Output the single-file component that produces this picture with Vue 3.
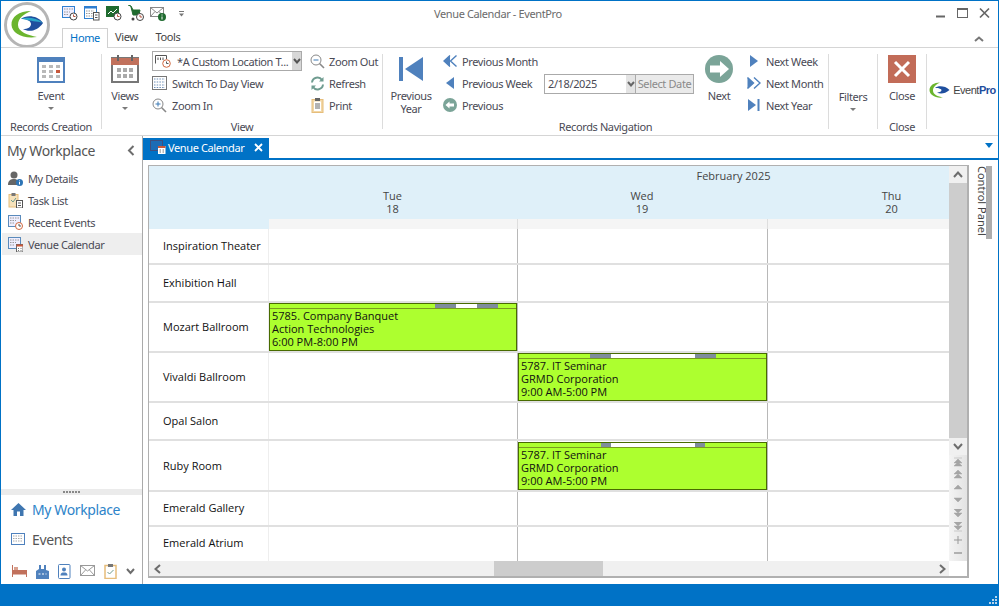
<script setup>
const days = [
  { name: 'Tue', num: 18 },
  { name: 'Wed', num: 19 },
  { name: 'Thu', num: 20 }
]
const banquet = { lines: ['5785. Company Banquet', 'Action Technologies', '6:00 PM-8:00 PM'], seg: [165, 21, 21, 21] }
const seminarA = { lines: ['5787. IT Seminar', 'GRMD Corporation', '9:00 AM-5:00 PM'], seg: [71, 21, 84, 21] }
const seminarB = { lines: ['5787. IT Seminar', 'GRMD Corporation', '9:00 AM-5:00 PM'], seg: [82, 10, 84, 10] }
const rows = [
  { name: 'Inspiration Theater', h: 36, cells: [null, null, null] },
  { name: 'Exhibition Hall', h: 38, cells: [null, null, null] },
  { name: 'Mozart Ballroom', h: 50, cells: [banquet, null, null] },
  { name: 'Vivaldi Ballroom', h: 50, cells: [null, seminarA, null] },
  { name: 'Opal Salon', h: 38, cells: [null, null, null] },
  { name: 'Ruby Room', h: 51, cells: [null, seminarB, null], top: 1 },
  { name: 'Emerald Gallery', h: 35, cells: [null, null, null] },
  { name: 'Emerald Atrium', h: 34, cells: [null, null, null] }
]
const scrollGlyphs = [
  'M1 1H9M5 2L1 6H9ZM5 5L1 9H9Z',
  'M5 0L1 4H9ZM5 4L1 8H9Z',
  'M5 2L1 6H9Z',
  'M1 2H9L5 6Z',
  'M1 0H9L5 4ZM1 4H9L5 8Z',
  'M1 0H9L5 4ZM1 4H9L5 8ZM1 9H9'
]
</script>

<template>
  <div class="win">
    <header class="head">
      <div class="logo-wrap">
        <svg class="ic" width="46" height="46" viewBox="0 0 46 46">
          <circle cx="23" cy="23" r="21.5" fill="#fff" stroke="#b5b5b5" stroke-width="3" />
          <path d="M27 9C15 9 7 15 7.500 23C8 31 18 37 33 35C24 33 14 30 14 23C14 16 20 12 27 9Z" fill="#6bb52e" />
          <path d="M17 17C22 13 33 13 39 21C33 30 24 30 19 27C24 27 27 25 27 22C27 19 23 17 17 17Z" fill="#1f4f9e" />
          <path d="M17 17C22 15 32 15 39 21C33 19 25 19 23 18C21 17 19 17 17 17Z" fill="#2aa7c9" />
        </svg>
      </div>
      <div class="head-main">
        <div class="title-row">
          <div class="qat">
            <svg class="ic" width="16" height="16" viewBox="0 0 16 16"><rect x=".5" y="1.500" width="12" height="11" fill="#eef" stroke="#2f7fd0"/><path d="M2 4h9M2 7h6M2 9.500h5" stroke="#999" stroke-dasharray="1.500 1"/><circle cx="11.500" cy="11.500" r="3.500" fill="#fff" stroke="#444"/><path d="M11.500 9.500v2h2" stroke="#b5533c" fill="none"/></svg>
            <svg class="ic" width="16" height="16" viewBox="0 0 16 16"><rect x=".5" y="1.500" width="12" height="12" fill="#fff" stroke="#2f7fd0"/><rect x=".5" y="1.500" width="12" height="2" fill="#2f7fd0"/><path d="M2 6h8M2 8.500h8M2 11h8" stroke="#999" stroke-dasharray="1.500 1"/><rect x="9.500" y="7.500" width="5.500" height="7.500" fill="#fff" stroke="#555"/><path d="M11 10h2.500M11 12.500h2.500" stroke="#555"/></svg>
            <svg class="ic" width="16" height="16" viewBox="0 0 16 16"><rect x="0" y="1" width="13" height="11" fill="#1f6b2f"/><path d="M2 9l3-3 2 2 4-4" stroke="#fff" fill="none"/><circle cx="11.500" cy="11.500" r="3.500" fill="#fff" stroke="#444"/><path d="M11.500 9.500v2h2" stroke="#b5533c" fill="none"/></svg>
            <svg class="ic" width="16" height="16" viewBox="0 0 16 16"><path d="M0 0l3 1 2 4h7l-1 5H5L3 2" fill="#1f6b2f" stroke="#1f6b2f"/><circle cx="5" cy="14" r="1.500" fill="#444"/><circle cx="12" cy="12" r="3.500" fill="#fff" stroke="#444"/><path d="M12 10v2h2" stroke="#b5533c" fill="none"/></svg>
            <svg class="ic" width="17" height="16" viewBox="0 0 17 16"><rect x=".5" y="2.500" width="13" height="9" fill="#fff" stroke="#888"/><path d="M.5 2.500L7 8l6.500-5.500M.5 11.500L5 6.500M13.500 11.500L9 6.500" stroke="#888" fill="none"/><circle cx="12" cy="12" r="4" fill="#1f6b2f"/><path d="M12 9.500v1M12 11.500v3" stroke="#fff"/></svg>
            <svg class="ic qat-caret" width="7" height="6" viewBox="0 0 7 6"><path d="M1 .5H6" stroke="#777"/><path d="M1 2.500H6L3.500 5.500Z" fill="#777"/></svg>
          </div>
          <div class="title">Venue Calendar - EventPro</div>
          <div class="winbtns">
            <svg class="ic win-min" width="9" height="12" viewBox="0 0 9 12"><path d="M0 9.500H9" stroke="#666" stroke-width="2"/></svg>
            <svg class="ic" width="11" height="12" viewBox="0 0 11 12"><rect x=".5" y="1.500" width="10" height="9" fill="none" stroke="#666"/><path d="M0 2H11" stroke="#666" stroke-width="2"/></svg>
            <svg class="ic" width="11" height="12" viewBox="0 0 11 12"><path d="M1 1.500L10 10.500M10 1.500L1 10.500" stroke="#666" stroke-width="1.700"/></svg>
          </div>
        </div>
        <div class="tabs-row">
          <div class="rtab active">Home</div>
          <div class="rtab">View</div>
          <div class="rtab">Tools</div>
          <svg class="ic collapse" width="10" height="6" viewBox="0 0 10 6"><path d="M1 5L5 1.500L9 5" stroke="#777" stroke-width="2" fill="none"/></svg>
        </div>
      </div>
    </header>

    <section class="ribbon">
      <div class="group g-create">
        <div class="g-body">
          <div class="big">
            <svg class="ic" width="28" height="26" viewBox="0 0 28 26"><rect x="1" y="1" width="26" height="24" fill="#fff" stroke="#4f81bd" stroke-width="2"/><rect x="1" y="1" width="26" height="4" fill="#4f81bd"/><g fill="#b9b9b9"><rect x="5" y="8" width="4" height="3"/><rect x="12" y="8" width="4" height="3"/><rect x="19" y="8" width="4" height="3"/><rect x="5" y="13" width="4" height="3"/><rect x="12" y="13" width="4" height="3"/><rect x="5" y="18" width="4" height="3"/><rect x="12" y="18" width="4" height="3"/><rect x="19" y="18" width="4" height="3"/></g><rect x="19" y="13" width="4" height="3" fill="#c8593c"/></svg>
            <span class="big-l">Event</span>
            <span class="caret"></span>
          </div>
        </div>
        <div class="g-label">Records Creation</div>
      </div>
      <div class="sep"></div>

      <div class="group g-view">
        <div class="g-body">
          <div class="big big-views">
            <svg class="ic" width="28" height="28" viewBox="0 0 28 28"><rect x="1" y="3" width="26" height="24" fill="#fff" stroke="#777" stroke-width="2"/><rect x="0" y="3" width="28" height="7" fill="#c1715c"/><rect x="6" y="0" width="2" height="6" fill="#666"/><rect x="20" y="0" width="2" height="6" fill="#666"/><g fill="#aaa"><rect x="6" y="13" width="4" height="4"/><rect x="12" y="13" width="4" height="4"/><rect x="18" y="13" width="4" height="4"/><rect x="6" y="19" width="4" height="4"/><rect x="12" y="19" width="4" height="4"/><rect x="18" y="19" width="4" height="4"/></g></svg>
            <span class="big-l">Views</span>
            <span class="caret"></span>
          </div>
          <div class="col col-view">
            <div class="combo">
              <svg class="ic" width="16" height="14" viewBox="0 0 16 14"><path d="M.5 9.500V1.500H11.500V5" fill="none" stroke="#555"/><path d="M3 3.500V6M5.500 3.500V6M8 3.500V6" stroke="#555"/><circle cx="11.500" cy="9.500" r="3.800" fill="#fff" stroke="#d0663e"/><path d="M11.500 7.500v2h2" stroke="#555" fill="none"/></svg>
              <span class="combo-t">*A Custom Location T...</span>
              <span class="combo-arrow"><svg class="ic" width="8" height="6" viewBox="0 0 8 6"><path d="M1 1L4 4.500L7 1" stroke="#555" stroke-width="2" fill="none"/></svg></span>
            </div>
            <div class="cmd">
              <svg class="ic" width="15" height="14" viewBox="0 0 15 14"><rect x=".5" y=".5" width="14" height="13" fill="#fff" stroke="#777"/><path d="M2 3H13M2 6H13M2 9H13M2 11.500H13" stroke="#6d8fb8" stroke-dasharray="1.500 1.200"/></svg>
              <span>Switch To Day View</span>
            </div>
            <div class="cmd">
              <svg class="ic" width="15" height="15" viewBox="0 0 15 15"><circle cx="6" cy="6" r="5" fill="#fff" stroke="#888"/><path d="M3.500 6H8.500M6 3.500V8.500" stroke="#3d7bb5"/><path d="M9.500 9.500L14 14" stroke="#888" stroke-width="1.600"/></svg>
              <span>Zoom In</span>
            </div>
          </div>
          <div class="col col-zoom">
            <div class="cmd">
              <svg class="ic" width="15" height="15" viewBox="0 0 15 15"><circle cx="6" cy="6" r="5" fill="#fff" stroke="#888"/><path d="M3.500 6H8.500" stroke="#3d7bb5"/><path d="M9.500 9.500L14 14" stroke="#888" stroke-width="1.600"/></svg>
              <span>Zoom Out</span>
            </div>
            <div class="cmd">
              <svg class="ic" width="15" height="15" viewBox="0 0 15 15"><path d="M2 6.500A5.500 5.500 0 0 1 12 4" fill="none" stroke="#6f9c90" stroke-width="2"/><path d="M13.500 1V5.500H9Z" fill="#6f9c90"/><path d="M13 8.500A5.500 5.500 0 0 1 3 11" fill="none" stroke="#6f9c90" stroke-width="2"/><path d="M1.500 14V9.500H6Z" fill="#6f9c90"/></svg>
              <span>Refresh</span>
            </div>
            <div class="cmd">
              <svg class="ic" width="15" height="15" viewBox="0 0 15 15"><rect x="2" y="1.500" width="11" height="13" fill="#f2d7a6" stroke="#e6bd7b"/><rect x="4" y="3.500" width="7" height="9.500" fill="#fff"/><rect x="5" y="0" width="5" height="3" fill="#666"/><path d="M5 6H10M5 8H10M5 10H10" stroke="#666"/></svg>
              <span>Print</span>
            </div>
          </div>
        </div>
        <div class="g-label">View</div>
      </div>
      <div class="sep"></div>

      <div class="group g-nav">
        <div class="g-body">
          <div class="big big-prev">
            <svg class="ic" width="24" height="24" viewBox="0 0 24 24"><rect x="0" y="0" width="4" height="24" fill="#4f81bd"/><path d="M24 0V24L6 12Z" fill="#4f81bd"/></svg>
            <span class="big-l two">Previous<br />Year</span>
          </div>
          <div class="col col-prev">
            <div class="cmd">
              <svg class="ic" width="14" height="12" viewBox="0 0 14 12"><path d="M7 .5L1 6L7 11.500M13.500 .5L7.500 6L13.500 11.500" fill="none" stroke="#4f81bd" stroke-width="1.400"/><path d="M7 .5L1 6L7 11.500Z" fill="#4f81bd"/></svg>
              <span>Previous Month</span>
            </div>
            <div class="cmd">
              <svg class="ic" width="14" height="12" viewBox="0 0 14 12"><path d="M11 0V12L3 6Z" fill="#4f81bd"/></svg>
              <span>Previous Week</span>
            </div>
            <div class="cmd">
              <svg class="ic" width="14" height="14" viewBox="0 0 14 14"><circle cx="7" cy="7" r="7" fill="#7ba498"/><path d="M2.500 7L6.500 3.500V5.500H11V8.500H6.500V10.500Z" fill="#fff"/></svg>
              <span>Previous</span>
            </div>
          </div>
          <div class="date-wrap">
            <div class="date">
              <span class="date-v">2/18/2025</span>
              <span class="date-arrow"><svg class="ic" width="8" height="6" viewBox="0 0 8 6"><path d="M1 1L4 4.500L7 1" stroke="#666" stroke-width="2" fill="none"/></svg></span>
              <span class="date-btn">Select Date</span>
            </div>
          </div>
          <div class="big big-next">
            <svg class="ic" width="28" height="28" viewBox="0 0 28 28"><circle cx="14" cy="14" r="14" fill="#7ba498"/><path d="M24 14L15 6V10.500H5V17.500H15V22Z" fill="#fff"/></svg>
            <span class="big-l">Next</span>
          </div>
          <div class="col col-next">
            <div class="cmd">
              <svg class="ic" width="14" height="12" viewBox="0 0 14 12"><path d="M3 0V12L11 6Z" fill="#4f81bd"/></svg>
              <span>Next Week</span>
            </div>
            <div class="cmd">
              <svg class="ic" width="14" height="12" viewBox="0 0 14 12"><path d="M7 .5L13 6L7 11.500M.5 .5L6.500 6L.5 11.500" fill="none" stroke="#4f81bd" stroke-width="1.400"/><path d="M.5 .5L6.500 6L.5 11.500Z" fill="#4f81bd"/></svg>
              <span>Next Month</span>
            </div>
            <div class="cmd">
              <svg class="ic" width="14" height="12" viewBox="0 0 14 12"><path d="M1 0V12L9 6Z" fill="#4f81bd"/><rect x="10.500" y="0" width="2" height="12" fill="#4f81bd"/></svg>
              <span>Next Year</span>
            </div>
          </div>
        </div>
        <div class="g-label">Records Navigation</div>
      </div>
      <div class="sep"></div>

      <div class="group g-filter">
        <div class="filter-btn">
          <span class="big-l">Filters</span>
          <span class="caret"></span>
        </div>
      </div>
      <div class="sep"></div>

      <div class="group g-close">
        <div class="g-body">
          <div class="big">
            <svg class="ic" width="28" height="28" viewBox="0 0 28 28"><rect width="28" height="28" fill="#c26c58"/><path d="M7 7L21 21M21 7L7 21" stroke="#fff" stroke-width="3"/></svg>
            <span class="big-l">Close</span>
          </div>
        </div>
        <div class="g-label">Close</div>
      </div>
      <div class="sep"></div>

      <div class="brand">
        <svg class="ic" width="21" height="17" viewBox="0 0 21 17"><path d="M11 .5C5 .5 .5 3.500 .5 8C.5 12.500 6 16.500 14 15.500C9 14.500 4 12.500 4 8.500C4 5 7 2.500 11 .5Z" fill="#6bb52e"/><path d="M6 6C9 3.500 16 3.500 20.500 8C16 12 11 12 8 10.500C11 10.500 12.500 9.500 12.500 8C12.500 7 10 6 6 6Z" fill="#1f4f9e"/></svg>
        <span class="brand-t">Event<b>Pro</b></span>
      </div>
    </section>

    <main class="main">
      <aside class="side">
        <div class="side-top">
          <span>My Workplace</span>
          <svg class="ic" width="8" height="11" viewBox="0 0 8 11"><path d="M6.500 1L2 5.500L6.500 10" fill="none" stroke="#6d6d6d" stroke-width="2"/></svg>
        </div>
        <div class="side-item">
          <svg class="ic" width="15" height="15" viewBox="0 0 15 15"><circle cx="6" cy="4" r="3.500" fill="#666"/><path d="M0 14C0 9 3 8 6 8C9 8 10 9 10 14Z" fill="#666"/><circle cx="11.500" cy="11.500" r="3.500" fill="#2e75b6"/><path d="M11.500 9.500v.8M11.500 11v2.500" stroke="#fff"/></svg>
          <span>My Details</span>
        </div>
        <div class="side-item">
          <svg class="ic" width="15" height="15" viewBox="0 0 15 15"><rect x="1" y="1.500" width="9" height="12.500" fill="#f6e2bb" stroke="#e6bd7b"/><rect x="3.500" y="0" width="4" height="3" fill="#777"/><path d="M3 7L5 9L8 5" fill="none" stroke="#6f9c90"/><rect x="8.500" y="7.500" width="6" height="7.500" fill="#fff" stroke="#555"/><path d="M10 10H13M10 12.500H13" stroke="#555"/></svg>
          <span>Task List</span>
        </div>
        <div class="side-item">
          <svg class="ic" width="15" height="15" viewBox="0 0 15 15"><rect x=".5" y=".5" width="12" height="11" fill="#eef" stroke="#5a8abb"/><path d="M2 3H11M2 5.500H8M2 8H6" stroke="#999" stroke-dasharray="1.500 1"/><circle cx="11" cy="11" r="3.500" fill="#fff" stroke="#d0663e"/><path d="M11 9v2h2" stroke="#555" fill="none"/></svg>
          <span>Recent Events</span>
        </div>
        <div class="side-item current">
          <svg class="ic" width="15" height="15" viewBox="0 0 15 15"><rect x=".5" y=".5" width="12" height="11" fill="#eef" stroke="#5a8abb"/><path d="M2 3H11M2 5.500H8M2 8H6" stroke="#999" stroke-dasharray="1.500 1"/><rect x="8.500" y="7.500" width="6.500" height="7.500" fill="#fff" stroke="#666"/><rect x="8.500" y="7.500" width="6.500" height="2" fill="#c8593c"/><path d="M10 11.500H11M12.500 11.500H13.500M10 13.500H11M12.500 13.500H13.500" stroke="#777"/></svg>
          <span>Venue Calendar</span>
        </div>
        <div class="splitter"><span></span><span></span><span></span><span></span><span></span><span></span></div>
        <div class="nav-big sel">
          <svg class="ic" width="15" height="13" viewBox="0 0 15 13"><path d="M7.500 0L15 7H12.500V13H9V8.500H6V13H2.500V7H0Z" fill="#3f76b0"/></svg>
          <span>My Workplace</span>
        </div>
        <div class="nav-big">
          <svg class="ic" width="15" height="13" viewBox="0 0 15 13"><rect x=".5" y=".5" width="13" height="11" fill="#fff" stroke="#4f81bd"/><path d="M2 3H12M2 5.500H12M2 8H12" stroke="#aaa" stroke-dasharray="1.500 1"/></svg>
          <span>Events</span>
        </div>
        <div class="nav-icons">
          <svg class="ic" width="15" height="12" viewBox="0 0 15 12"><path d="M.5 0V12M14.500 5V12M.5 9H14.500" stroke="#c1715c" fill="none"/><rect x="1" y="5" width="13.500" height="4" fill="#c1715c"/><rect x="2" y="2" width="4" height="3" fill="#d9a18f"/></svg>
          <svg class="ic" width="13" height="15" viewBox="0 0 13 15"><path d="M0 15V7L3 5V1H5V5H8V1H10V6L13 7V15Z" fill="#4f81bd"/><path d="M2.500 10H10.500" stroke="#fff" stroke-dasharray="2 1.500"/></svg>
          <svg class="ic" width="13" height="15" viewBox="0 0 13 15"><rect x=".5" y=".5" width="11.500" height="14" rx="1" fill="#fff" stroke="#4f81bd"/><circle cx="6" cy="5.500" r="2" fill="#4f81bd"/><path d="M2.500 11.500C2.500 9 4 8.500 6 8.500C8 8.500 9.500 9 9.500 11.500Z" fill="#4f81bd"/></svg>
          <svg class="ic" width="15" height="12" viewBox="0 0 15 12"><rect x=".5" y=".5" width="14" height="10" fill="#fff" stroke="#999"/><path d="M.5 .5L7.500 6L14.500 .5M.5 10.500L5.500 5M14.500 10.500L9.500 5" fill="none" stroke="#999"/></svg>
          <svg class="ic" width="13" height="15" viewBox="0 0 13 15"><rect x="1" y="1.500" width="11" height="13" fill="#fff" stroke="#e6bd7b" stroke-width="1.500"/><rect x="4" y="0" width="5" height="3" fill="#777"/><path d="M3.500 8L5.500 10L9.500 6" fill="none" stroke="#6f9c90"/></svg>
          <svg class="ic" width="9" height="7" viewBox="0 0 9 7"><path d="M1 1L4.500 5L8 1" fill="none" stroke="#6d6d6d" stroke-width="2"/></svg>
        </div>
      </aside>

      <div class="content">
        <div class="doc-strip">
          <div class="doc-tab">
            <svg class="ic" width="16" height="14" viewBox="0 0 16 14"><rect x=".5" y=".5" width="12" height="10" fill="#1d6cb5" stroke="#3d4f80"/><rect x="8" y="6" width="7.500" height="8" fill="#fff"/><rect x="8" y="6" width="7.500" height="2" fill="#c8593c"/><path d="M9.500 10H11M12.500 10H14M9.500 12H11M12.500 12H14" stroke="#777"/></svg>
            <span>Venue Calendar</span>
            <svg class="ic" width="9" height="9" viewBox="0 0 9 9"><path d="M1 1L8 8M8 1L1 8" stroke="#fff" stroke-width="1.800"/></svg>
          </div>
          <svg class="ic strip-caret" width="8" height="5" viewBox="0 0 8 5"><path d="M0 0H8L4 5Z" fill="#0072c6"/></svg>
        </div>
        <div class="doc-body">
          <div class="frame">
            <div class="frame-top">
              <div class="cal">
                <div class="cal-head">
                  <div class="month">February 2025</div>
                  <div class="day-row">
                    <div></div>
                    <div v-for="d in days" :key="d.name" class="day">
                      <div>{{ d.name }}</div>
                      <div>{{ d.num }}</div>
                    </div>
                  </div>
                </div>
                <div class="tick-row">
                  <div class="tick-corner"></div>
                  <div class="tick"></div>
                  <div class="tick"></div>
                  <div class="tick"></div>
                </div>
                <div v-for="r in rows" :key="r.name" class="row" :style="{ height: r.h + 'px' }">
                  <div class="res" :class="{ centred: r.top }">{{ r.name }}</div>
                  <div v-for="(c, i) in r.cells" :key="i" class="cell">
                    <div v-if="c" class="ev" :class="{ lowered: r.top }">
                      <div class="ev-strip">
                        <span v-for="(w, j) in c.seg" :key="j" class="seg" :style="{ width: w + 'px' }"></span>
                      </div>
                      <div v-for="l in c.lines" :key="l" class="ev-l">{{ l }}</div>
                    </div>
                  </div>
                </div>
              </div>
              <div class="vscroll">
                <div class="v-btn"><svg class="ic" width="10" height="7" viewBox="0 0 10 7"><path d="M1 6L5 1.500L9 6" stroke="#6d6d6d" stroke-width="2" fill="none"/></svg></div>
                <div class="v-thumb"></div>
                <div class="v-btn"><svg class="ic" width="10" height="7" viewBox="0 0 10 7"><path d="M1 1L5 5.500L9 1" stroke="#6d6d6d" stroke-width="2" fill="none"/></svg></div>
                <div class="v-nav">
                  <svg v-for="(g, i) in scrollGlyphs" :key="i" class="ic" width="10" height="10" viewBox="0 0 10 10"><path :d="g" fill="#a5a5a5" stroke="#a5a5a5" stroke-width=".5"/></svg>
                  <svg class="ic" width="10" height="10" viewBox="0 0 10 10"><path d="M5 1V9M1 5H9" stroke="#999"/></svg>
                  <svg class="ic" width="10" height="10" viewBox="0 0 10 10"><path d="M1 5H9" stroke="#888" stroke-width="1.200"/></svg>
                </div>
              </div>
            </div>
            <div class="hscroll">
              <svg class="ic" width="7" height="10" viewBox="0 0 7 10"><path d="M6 1L1.500 5L6 9" stroke="#6d6d6d" stroke-width="2" fill="none"/></svg>
              <div class="h-thumb"></div>
              <svg class="ic" width="7" height="10" viewBox="0 0 7 10"><path d="M1 1L5.500 5L1 9" stroke="#6d6d6d" stroke-width="2" fill="none"/></svg>
            </div>
          </div>
          <div class="panel">
            <span class="panel-t">Control Panel</span>
            <span class="panel-bar"></span>
          </div>
        </div>
      </div>
    </main>

    <footer class="status">
      <svg class="ic" width="9" height="9" viewBox="0 0 9 9"><g fill="#b8d4ea"><rect x="6" y="0" width="2" height="2"/><rect x="3" y="3" width="2" height="2"/><rect x="6" y="3" width="2" height="2"/><rect x="0" y="6" width="2" height="2"/><rect x="3" y="6" width="2" height="2"/><rect x="6" y="6" width="2" height="2"/></g></svg>
    </footer>
  </div>
</template>

<style>
html, body { margin: 0; padding: 0; background: #fff; }
</style>

<style scoped>
.win {
  width: 999px;
  height: 606px;
  box-sizing: border-box;
  border: 1px solid #0072c6;
  border-bottom: 0;
  display: flex;
  flex-direction: column;
  overflow: hidden;
  background: #fff;
  font-family: "Noto Sans", "Open Sans", sans-serif;
  font-size: 11px;
  letter-spacing: -.38px;
  color: #4a4a55;
}
.ic { display: block; flex: none; }

.head { display: flex; height: 46px; flex: none; }
.logo-wrap { width: 61px; flex: none; padding: 1px 0 0 3px; box-sizing: border-box; }
.head-main { flex: 1; display: flex; flex-direction: column; min-width: 0; }
.title-row { height: 23px; display: flex; align-items: center; padding-top: 1px; box-sizing: border-box; }
.qat { width: 372px; flex: none; display: flex; align-items: center; gap: 6px; }
.qat-caret { margin-left: 5px; margin-top: 2px; }
.title { flex: 1; color: #6b6b6b; font-size: 11px; }
.winbtns { display: flex; gap: 11px; padding-right: 8px; align-items: center; }
.win-min { margin-right: 1px; }
.tabs-row { flex: 1; display: flex; align-items: flex-end; position: relative; }
.rtab { height: 19px; line-height: 18px; padding: 0 8px; color: #444; box-sizing: border-box; }
.rtab:nth-child(2) { margin-left: -1px; }
.rtab:nth-child(3) { margin-left: 2px; }
.rtab.active {
  width: 46px;
  height: 20px;
  padding: 0;
  text-align: center;
  color: #0072c6;
  border: 1px solid #d0d0d0;
  border-bottom: 0;
  background: #fff;
  margin-bottom: -1px;
  position: relative;
  z-index: 1;
}
.collapse { margin-left: auto; margin-right: 14px; margin-bottom: 5px; }

.ribbon {
  height: 89px;
  flex: none;
  display: flex;
  box-sizing: border-box;
  border-top: 1px solid #d5d5d5;
  border-bottom: 1px solid #d5d5d5;
}
.group { display: flex; flex-direction: column; flex: none; }
.g-create { width: 100px; }
.g-view { width: 280px; }
.g-nav { width: 445px; }
.g-filter { width: 48px; }
.g-close { width: 48px; }
.sep { width: 1px; background: #dcdcdc; margin: 6px 0 6px; flex: none; }
.g-body { flex: 1; display: flex; min-height: 0; }
.g-label { height: 16px; line-height: 16px; text-align: center; color: #4a4a55; flex: none; }
.big { display: flex; flex-direction: column; align-items: center; flex: none; width: 100%; padding-top: 7px; box-sizing: border-box; }
.big-l { margin-top: 6px; line-height: 13px; text-align: center; }
.big-l.two { margin-top: 9px; line-height: 12.500px; }
.caret { width: 0; height: 0; border: 3px solid transparent; border-top: 3.500px solid #7a7a7a; border-bottom: 0; margin-top: 5px; }
.g-create .big svg { margin-top: 2px; }
.big-views { width: 44px; margin-left: 1px; }
.col { display: flex; flex-direction: column; flex: none; padding-top: 2px; }
.col-view { width: 158px; margin-left: 5px; }
.cmd { height: 22px; display: flex; align-items: center; gap: 5px; white-space: nowrap; }
.col-zoom .cmd { gap: 4px; }
.combo {
  width: 150px;
  height: 20px;
  margin: 1px 0;
  box-sizing: border-box;
  border: 1px solid #aaa;
  display: flex;
  align-items: center;
  padding-left: 2px;
}
.combo-t { margin-left: 6px; flex: 1; white-space: nowrap; overflow: hidden; }
.combo-arrow { width: 9px; height: 100%; background: #d7d7d7; display: flex; align-items: center; justify-content: center; flex: none; }
.big-prev { width: 56px; }
.big-prev svg { margin-top: 2px; }
.col-prev { width: 101px; margin-left: 4px; }
.date-wrap { width: 156px; flex: none; padding-top: 26px; }
.date {
  width: 150px;
  height: 20px;
  box-sizing: border-box;
  border: 1px solid #aaa;
  display: flex;
  align-items: center;
}
.date-v { flex: 1; padding: 0 0 2px 3px; }
.date-arrow { width: 9px; height: 100%; background: #e4e4e4; display: flex; align-items: center; justify-content: center; }
.date-btn { width: 58px; height: 100%; background: #eaeaea; border-left: 1px solid #aaa; color: #8a8a8a; text-align: center; line-height: 17px; box-sizing: border-box; white-space: nowrap; overflow: hidden; }
.big-next { width: 38px; }
.col-next { margin-left: 9px; }
.filter-btn { display: flex; flex-direction: column; align-items: center; padding-top: 36px; }
.brand { flex: 1; display: flex; align-items: center; justify-content: center; gap: 3px; padding-bottom: 3px; }
.brand-t { font-size: 11px; letter-spacing: -.5px; color: #444; font-family: "Liberation Sans", sans-serif; }
.brand-t b { color: #1f4f9e; }

.main { flex: 1; display: flex; min-height: 0; }
.side { width: 142px; flex: none; box-sizing: border-box; border-right: 1px solid #aaa; display: flex; flex-direction: column; }
.side-top { height: 31px; display: flex; align-items: center; justify-content: space-between; padding: 0 7px 3px 6px; box-sizing: border-box; font-size: 14px; color: #555; flex: none; }
.side-item { height: 22px; display: flex; align-items: center; gap: 5px; padding-left: 6px; margin-left: 1px; flex: none; color: #4a4a55; }
.side-item.current { background: #eeeeee; }
.splitter { margin-top: auto; height: 6px; background: #ebebeb; display: flex; justify-content: center; align-items: center; gap: 1px; flex: none; }
.splitter span { width: 2px; height: 2px; background: #888; }
.nav-big { height: 30px; display: flex; align-items: center; gap: 6px; padding: 0 0 2px 10px; box-sizing: border-box; font-size: 14px; color: #555; flex: none; }
.nav-big.sel { color: #2e84c9; }
.nav-icons { height: 29px; display: flex; align-items: center; gap: 9px; padding-left: 11px; padding-top: 3px; box-sizing: border-box; flex: none; }

.content { flex: 1; min-width: 0; display: flex; flex-direction: column; }
.doc-strip { height: 24px; flex: none; box-sizing: border-box; border-bottom: 2px solid #0072c6; display: flex; align-items: flex-end; justify-content: space-between; padding-right: 5px; }
.doc-tab { width: 126px; height: 20px; background: #0072c6; color: #fff; display: flex; align-items: center; padding: 0 6px 2px 7px; box-sizing: border-box; gap: 2px; }
.doc-tab span { flex: 1; white-space: nowrap; }
.strip-caret { margin-bottom: 10px; }
.doc-body { flex: 1; display: flex; padding: 5px 0 6px 5px; min-height: 0; }
.frame { width: 821px; flex: none; box-sizing: border-box; border: 1px solid #b0b0b0; border-right: 2px solid #b0b0b0; border-bottom: 2px solid #b0b0b0; display: flex; flex-direction: column; }
.frame-top { display: flex; height: 395px; flex: none; }
.cal { width: 800px; flex: none; overflow: hidden; font-family: "Open Sans", "Noto Sans", sans-serif; letter-spacing: 0; color: #111; }
.cal-head { height: 53px; background: #dff0f9; color: #444; box-sizing: border-box; }
.month { height: 20px; line-height: 20px; margin-left: 369px; text-align: center; }
.day-row { display: grid; grid-template-columns: 120px 249px 250px 249px; width: 868px; padding-top: 3px; }
.day { text-align: center; line-height: 13px; padding-right: 2px; }
.tick-row { display: grid; grid-template-columns: 120px 249px 250px 249px; width: 868px; height: 10px; }
.tick-corner { background: #dff0f9; }
.tick { background: #f5f5f5; border-right: 1px solid #dedede; }
.row { display: grid; grid-template-columns: 120px 249px 250px 249px; width: 868px; box-sizing: border-box; border-bottom: 2px solid #e0e0e0; }
.row:last-child { border-bottom: 0; }
.res { display: flex; align-items: center; padding: 0 0 2px 14px; border-right: 1px solid #eeeeee; white-space: nowrap; box-sizing: border-box; }
.res.centred { padding-bottom: 0; }
.row:last-child .res { padding-bottom: 4px; }
.cell { border-right: 1px solid #b8b8b8; box-sizing: border-box; min-width: 0; }
.ev { height: 48px; box-sizing: border-box; border: 1px solid #486b00; background: #adff2f; }
.ev.lowered { margin-top: 1px; }
.ev-strip { height: 4px; display: flex; border-bottom: 1px solid #7a9a20; }
.seg { display: block; height: 100%; }
.seg:nth-child(2), .seg:nth-child(4) { background: #7f8c9c; }
.seg:nth-child(3) { background: #fff; }
.ev-l { height: 13px; line-height: 13px; padding-left: 2px; white-space: nowrap; color: #111; }
.vscroll { width: 18px; flex: none; display: flex; flex-direction: column; background: #ececec; }
.v-btn { height: 17px; display: flex; align-items: center; justify-content: center; background: #f0f0f0; flex: none; }
.v-thumb { height: 255px; background: #cdcdcd; flex: none; }
.v-nav { flex: 1; display: flex; flex-direction: column; align-items: center; gap: 3px; padding-top: 2px; background: linear-gradient(90deg, #f4f4f4, #e3e3e3); }
.hscroll { flex: 1; display: flex; align-items: center; background: #f0f0f0; width: 800px; box-sizing: border-box; padding: 0 3px 0 5px; }
.h-thumb { width: 109px; height: 100%; background: #cdcdcd; margin-left: 333px; margin-right: auto; }
.panel { flex: 1; display: flex; padding-left: 6px; align-items: flex-start; letter-spacing: 0; }
.panel-t { writing-mode: vertical-rl; color: #444; line-height: 14px; white-space: nowrap; margin-top: 1px; }
.panel-bar { width: 6px; height: 73px; background: #adadad; margin-top: 1px; margin-left: -3px; }
.status { height: 22px; flex: none; background: #0072c6; margin: 0 -1px; display: flex; justify-content: flex-end; align-items: flex-end; padding: 0 1px 1px 0; box-sizing: border-box; }
</style>
